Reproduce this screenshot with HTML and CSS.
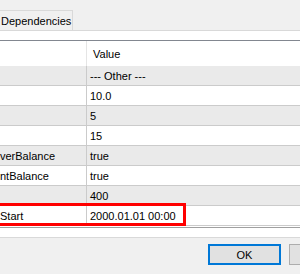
FILE: index.html
```html
<!DOCTYPE html>
<html lang="en">
<head>
    <meta charset="UTF-8">
    <meta name="viewport" content="width=device-width, initial-scale=1.0">
    <title>Properties</title>
    <link rel="stylesheet" href="styles.css">
</head>
<body>

    <div class="tabs">
        <div class="tab">Dependencies</div>
    </div>

    <div class="page">
        <div class="grid">
            <div class="grid-head">
                <div class="cell name"></div>
                <div class="cell value">Value</div>
            </div>
            <div class="row alt">
                <div class="cell name"></div>
                <div class="cell value">--- Other ---</div>
            </div>
            <div class="row">
                <div class="cell name"></div>
                <div class="cell value">10.0</div>
            </div>
            <div class="row alt">
                <div class="cell name"></div>
                <div class="cell value">5</div>
            </div>
            <div class="row">
                <div class="cell name"></div>
                <div class="cell value">15</div>
            </div>
            <div class="row alt">
                <div class="cell name">verBalance</div>
                <div class="cell value">true</div>
            </div>
            <div class="row">
                <div class="cell name">ntBalance</div>
                <div class="cell value">true</div>
            </div>
            <div class="row alt">
                <div class="cell name"></div>
                <div class="cell value">400</div>
            </div>
            <div class="row marked">
                <div class="cell name">Start</div>
                <div class="cell value">2000.01.01 00:00</div>
                <div class="highlight"></div>
            </div>
        </div>
    </div>

    <div class="buttons">
        <button class="btn default">OK</button>
        <button class="btn" aria-label="Cancel"></button>
    </div>

</body>
</html>
```

FILE: styles.css
```css
body {
    font-family: "Liberation Sans", Arial, sans-serif;
    font-size: 11px;
    color: #000;
    background-color: #f0f0f0;
    margin: 0;
    width: 300px;
    height: 274px;
    overflow: hidden;
}
.tabs {
    display: flex;
    height: 30px;
    padding-top: 10px;
    box-sizing: border-box;
}
.tab {
    width: 73px;
    box-sizing: border-box;
    border: 1px solid #d9d9d9;
    border-left: none;
    border-bottom: none;
    display: flex;
    align-items: center;
    padding-left: 1px;
    font-size: 11px;
}
.page {
    background-color: #fff;
    border-top: 1px solid #d9d9d9;
    border-bottom: 1px solid #d9d9d9;
    padding: 9px 0 9px 0;
}
.grid {
    border-top: 1px solid #828790;
    border-bottom: 1px solid #a0a0a0;
    padding-bottom: 1px;
}
.grid-head {
    display: flex;
    height: 25px;
}
.grid-head .name {
    border-right: 1px solid #e5e5e5;
}
.grid-head .value {
    padding-left: 6px;
}
.row {
    display: flex;
    height: 19px;
    border-bottom: 1px solid #cbcbcb;
    position: relative;
}
.row.alt {
    background-color: #eaeaea;
}
.cell {
    display: flex;
    align-items: center;
    white-space: nowrap;
    overflow: hidden;
}
.name {
    width: 86px;
    flex-shrink: 0;
    border-right: 1px solid #cbcbcb;
}
.value {
    flex: 1;
    padding-left: 3px;
}
.highlight {
    position: absolute;
    left: -5px;
    top: -3px;
    width: 191px;
    height: 23px;
    border: 3px solid #f00;
    box-sizing: border-box;
}
.buttons {
    display: flex;
    gap: 8px;
    padding: 6px 0 0 208px;
}
.btn {
    flex-shrink: 0;
    width: 73px;
    height: 21px;
    font-family: "Liberation Sans", Arial, sans-serif;
    font-size: 11px;
    color: #000;
    background-color: #e1e1e1;
    border: 1px solid #adadad;
    padding: 0;
}
.btn.default {
    border: 2px solid #0078d7;
}
```
